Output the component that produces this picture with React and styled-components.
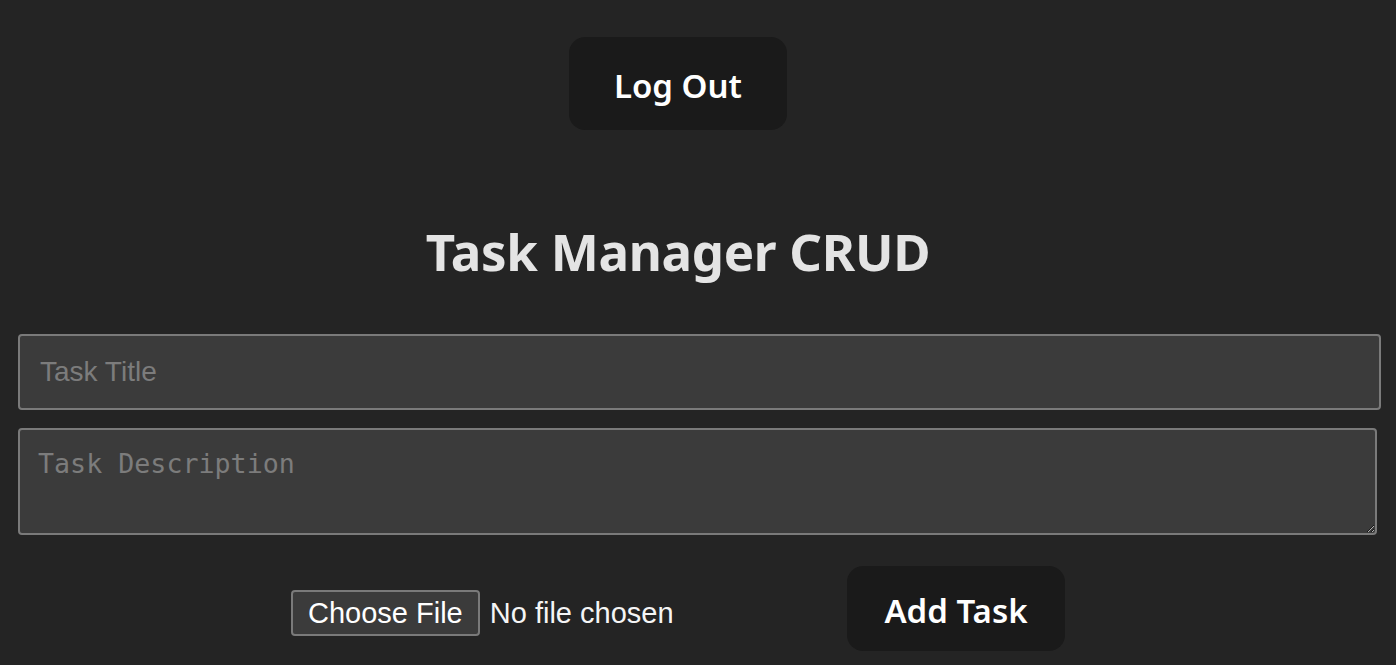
import React from 'react'
import styled, { createGlobalStyle } from 'styled-components'

const GlobalStyle = createGlobalStyle`
    html, body {
        margin: 0;
        padding: 0;
        background: #242424;
        color-scheme: dark;
    }
    body {
        font-family: 'Noto Sans', 'Open Sans', sans-serif;
        color: rgba(255, 255, 255, 0.87);
        min-height: 665px;
    }
`

const Page = styled.div`
    width: 1356px;
    display: flex;
    flex-direction: column;
    align-items: center;
    padding-top: 37px;
`

const Button = styled.button`
    width: 218px;
    height: ${(props) => props.h}px;
    padding: 4px 0 0;
    border: 2px solid transparent;
    border-radius: 16px;
    background: #1a1a1a;
    color: #ffffff;
    font-family: 'Noto Sans', sans-serif;
    font-size: 33px;
    font-weight: 600;
    cursor: pointer;
`

const Title = styled.h1`
    margin: 85px 0 47px;
    font-size: 51px;
    font-weight: 700;
    line-height: 72px;
    color: #e4e4e4;
    letter-spacing: -0.3px;
`

const Form = styled.div`
    align-self: stretch;
    display: flex;
    flex-direction: column;
    gap: 18px;
    padding-left: 18px;
`

const TitleInput = styled.input`
    box-sizing: border-box;
    width: 1363px;
    height: 76px;
    padding: 0 20px;
    background: #3b3b3b;
    border: 2px solid #7a7a7a;
    border-radius: 4px;
    color: #ffffff;
    font-family: 'Liberation Sans', Arial, sans-serif;
    font-size: 28px;
    outline: none;

    &::placeholder {
        color: #7c7c7c;
    }
`

const DescArea = styled.textarea`
    box-sizing: border-box;
    width: 1359px;
    height: 107px;
    padding: 18px 18px;
    background: #3b3b3b;
    border: 2px solid #7a7a7a;
    border-radius: 4px;
    color: #ffffff;
    font-family: 'DejaVu Sans Mono', monospace;
    font-size: 26.67px;
    outline: none;
    display: block;

    &::placeholder {
        color: #7c7c7c;
    }
`

const Row = styled.div`
    display: flex;
    align-items: center;
    gap: 170px;
    margin-top: 31px;
`

const FileInput = styled.input`
    font-family: 'Liberation Sans', Arial, sans-serif;
    font-size: 29px;
    color: #f5f5f5;
    width: 386px;
    margin-top: 9px;

    &::file-selector-button {
        font-family: 'Liberation Sans', Arial, sans-serif;
        font-size: 29px;
        height: 46px;
        padding: 0 15px;
        margin-right: 10px;
        background: #3b3b3b;
        color: #ffffff;
        border: 2px solid #7a7a7a;
        border-radius: 4px;
    }
`

export default function App() {
    return (
        <>
            <GlobalStyle />
            <Page>
                <Button h={93}>Log Out</Button>
                <Title>Task Manager CRUD</Title>
                <Form>
                    <TitleInput placeholder="Task Title" />
                    <DescArea placeholder="Task Description" />
                </Form>
                <Row>
                    <FileInput type="file" />
                    <Button h={85}>Add Task</Button>
                </Row>
            </Page>
        </>
    )
}
